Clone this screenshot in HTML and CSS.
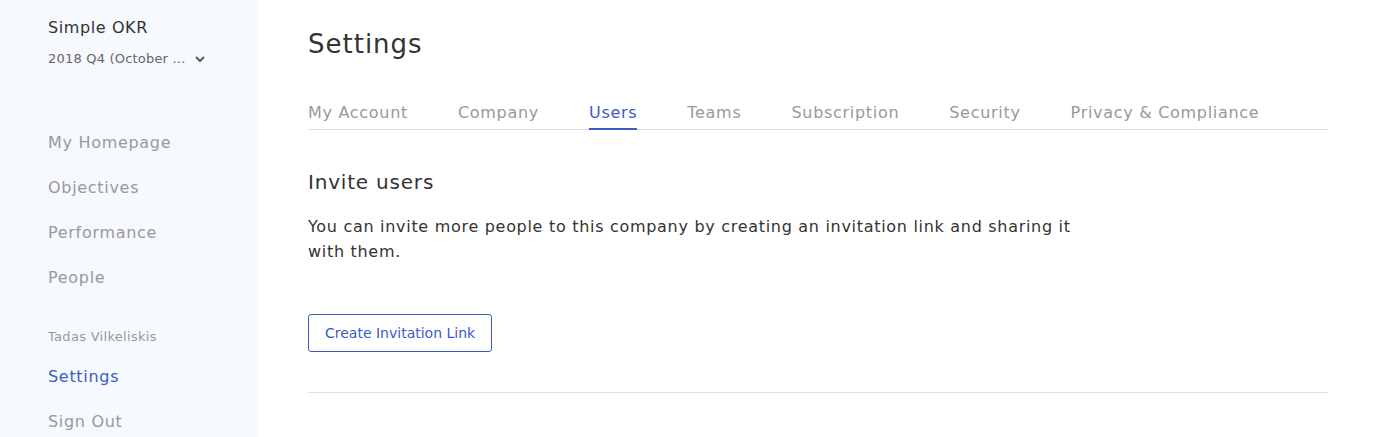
FILE: index.html
```html
<!DOCTYPE html>
<html>
<head>
<meta charset="utf-8">
<link rel="stylesheet" href="styles.css">
</head>
<body>
<div class="app">
  <aside class="sidebar">
    <div class="brand">Simple OKR</div>
    <div class="period">2018 Q4 (October ...
      <svg class="chev" width="10" height="7" viewBox="0 0 10 7"><path d="M1.5 1.5 L5 5 L8.5 1.5" fill="none" stroke="#555" stroke-width="1.8" stroke-linecap="round" stroke-linejoin="round"/></svg>
    </div>
    <nav class="nav">
      <a class="nav-item">My Homepage</a>
      <a class="nav-item">Objectives</a>
      <a class="nav-item">Performance</a>
      <a class="nav-item">People</a>
    </nav>
    <div class="user">Tadas Vilkeliskis</div>
    <nav class="nav nav-user">
      <a class="nav-item active">Settings</a>
      <a class="nav-item">Sign Out</a>
    </nav>
  </aside>
  <main class="main">
    <h1 class="title">Settings</h1>
    <div class="tabs">
      <a class="tab">My Account</a>
      <a class="tab">Company</a>
      <a class="tab active">Users</a>
      <a class="tab">Teams</a>
      <a class="tab">Subscription</a>
      <a class="tab">Security</a>
      <a class="tab">Privacy &amp; Compliance</a>
    </div>
    <section class="section">
      <h2 class="section-title">Invite users</h2>
      <p class="desc">You can invite more people to this company by creating an invitation link and sharing it with them.</p>
      <button class="btn">Create Invitation Link</button>
    </section>
    <hr class="divider">
  </main>
</div>
</body>
</html>
```
FILE: styles.css
```css
* { box-sizing: border-box; }
html, body { margin: 0; padding: 0; }
body {
  font-family: "DejaVu Sans", sans-serif;
  background: #fff;
  color: #333;
  height: 437px;
  overflow: hidden;
}
.app { display: flex; height: 437px; }
.sidebar {
  width: 258px;
  flex: none;
  background: #f6f9fd;
  padding: 18px 0 0 48px;
}
.brand {
  font-size: 16px;
  letter-spacing: 0.6px;
  color: #333;
  line-height: 20px;
}
.period {
  margin-top: 12px;
  font-size: 13px;
  letter-spacing: 0.2px;
  color: #666;
  line-height: 18px;
  display: flex;
  align-items: center;
}
.chev { margin-left: 10px; }
.nav { display: flex; flex-direction: column; }
.nav:first-of-type { margin-top: 65px; }
.nav-item {
  font-size: 16px;
  letter-spacing: 0.7px;
  color: #999;
  line-height: 20px;
  margin-bottom: 25px;
}
.nav-item.active { color: #3b5cc4; }
.user {
  margin-top: 16px;
  font-size: 13px;
  letter-spacing: 0.3px;
  color: #999;
  line-height: 16px;
}
.nav-user { margin-top: 22px; }
.main {
  flex: 1;
  padding: 28px 49px 0 50px;
}
.title {
  margin: 0;
  font-weight: normal;
  font-size: 26px;
  letter-spacing: 1px;
  line-height: 32px;
  color: #333;
}
.tabs {
  margin-top: 43px;
  display: flex;
  gap: 50px;
  border-bottom: 1px solid #e0e0e0;
}
.tab {
  font-size: 16px;
  letter-spacing: 0.7px;
  color: #999;
  line-height: 20px;
  padding-bottom: 5px;
  margin-bottom: -1px;
  border-bottom: 2px solid transparent;
}
.tab.active { color: #3b5cc4; border-bottom-color: #3b5cc4; }
.section { padding-top: 40px; }
.section-title {
  margin: 0;
  font-weight: normal;
  font-size: 20px;
  letter-spacing: 0.8px;
  line-height: 24px;
  color: #333;
}
.desc {
  margin: 20px 0 0;
  max-width: 780px;
  font-size: 16px;
  letter-spacing: 0.7px;
  line-height: 25px;
  color: #333;
}
.btn {
  margin-top: 50px;
  height: 38px;
  padding: 0 16px;
  background: #fff;
  border: 1px solid #3b5cc4;
  border-radius: 3px;
  color: #3b5cc4;
  font-family: "DejaVu Sans", sans-serif;
  font-size: 14px;
  letter-spacing: 0;
}
.divider {
  margin: 40px 0 0;
  border: 0;
  border-top: 1px solid #e0e0e0;
}
```
